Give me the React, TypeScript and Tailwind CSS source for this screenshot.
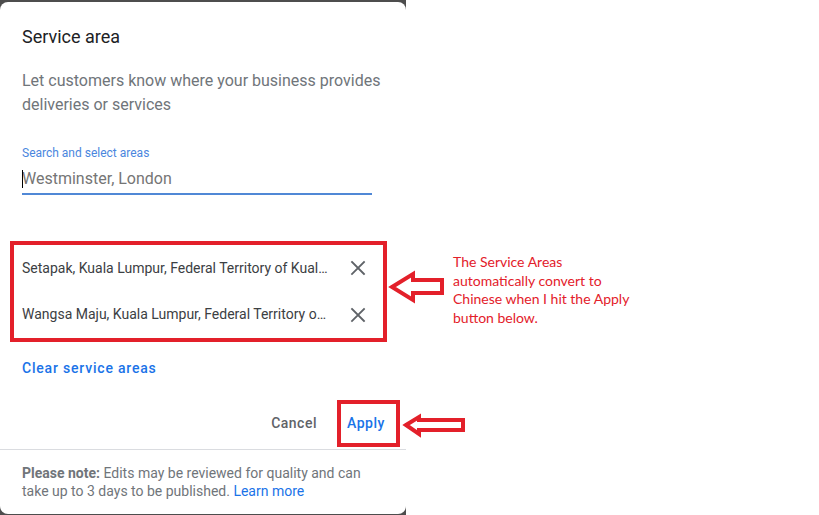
import React from 'react';

function CloseIcon() {
  return (
    <svg width="16" height="16" viewBox="0 0 16 16" fill="none">
      <path d="M2 2L14 14M14 2L2 14" stroke="#5f6368" strokeWidth="1.8" strokeLinecap="square" />
    </svg>
  );
}

const areas = [
  'Setapak, Kuala Lumpur, Federal Territory of Kuala Lumpur, Malaysia',
  'Wangsa Maju, Kuala Lumpur, Federal Territory of Kuala Lumpur, Malaysia',
];

export default function App() {
  return (
    <div className="relative w-[819px] h-[515px] bg-white flex overflow-hidden font-['Roboto',sans-serif]">
      {/* Dialog */}
      <div className="w-[406px] h-full shrink-0 bg-[#4d4d4d] pt-[2px]">
        <div className="h-[512px] bg-white rounded-[8px] flex flex-col">
          <div className="px-[22px] pt-[23px]">
            <h2 className="text-[18px] leading-[24px] text-[#202124]">Service area</h2>
            <p className="mt-[20px] w-[365px] text-[16px] leading-[24px] text-[#70757a]">
              Let customers know where your business provides deliveries or services
            </p>
            <div className="mt-[28px]">
              <div className="text-[12px] leading-[16px] text-[#4a86de]">Search and select areas</div>
              <div className="relative mt-[6px] w-[350px] pb-[2px] border-b-2 border-[#5088d6] text-[16px] leading-[24px] text-[#757575]">
                <span className="absolute left-0 top-[3px] w-px h-[18px] bg-black" />
                Westminster, London
              </div>
            </div>
          </div>

          {/* Selected areas */}
          <div className="mt-[46px] ml-[10px] w-[377px] border-4 border-[#e3202a]">
            {areas.map((a) => (
              <div key={a} className="h-[46.5px] flex items-center pl-[8px] pr-[17px]">
                <span className="w-[308px] truncate text-[14px] text-[#3c4043]">{a}</span>
                <span className="ml-auto">
                  <CloseIcon />
                </span>
              </div>
            ))}
          </div>

          <div className="ml-[22px] mt-[16px] text-[14px] leading-[20px] font-medium tracking-[0.8px] text-[#1a73e8]">
            Clear service areas
          </div>

          <div className="mt-[22px] flex items-center justify-end pr-[6px]">
            <span className="text-[14px] font-medium tracking-[0.5px] text-[#5f6368]">Cancel</span>
            <div className="ml-[20px] w-[63px] h-[47px] border-4 border-[#e3202a] flex items-center pl-[6px] text-[14px] font-medium tracking-[0.5px] text-[#1a73e8]">
              Apply
            </div>
          </div>

          <div className="mt-[2px] border-t border-[#dadce0] pt-[14px] px-[22px]">
            <p className="w-[350px] text-[14px] leading-[18px] text-[#70757a]">
              <span className="font-bold">Please note:</span> Edits may be reviewed for quality and can take up to 3 days
              to be published. <span className="text-[#1a73e8]">Learn more</span>
            </p>
          </div>
        </div>
      </div>

      {/* Annotation */}
      <div className="flex-1 pl-[47px] pt-[253px]">
        <p className="text-[14px] leading-[18.5px] text-[#e3202a] font-['Lato',sans-serif]">
          The Service Areas
          <br />
          automatically convert to
          <br />
          Chinese when I hit the Apply
          <br />
          button below.
        </p>
      </div>

      <svg className="absolute inset-0 pointer-events-none" width="819" height="515" viewBox="0 0 819 515" fill="none">
        <polygon
          points="392,287 413,274 413,280 442,280 442,293 413,293 413,300"
          stroke="#e3202a"
          strokeWidth="4"
          strokeLinejoin="miter"
        />
        <polygon
          points="406,425 419,417 419,420 463,420 463,430 419,430 419,434"
          stroke="#e3202a"
          strokeWidth="4"
          strokeLinejoin="miter"
        />
      </svg>
    </div>
  );
}
